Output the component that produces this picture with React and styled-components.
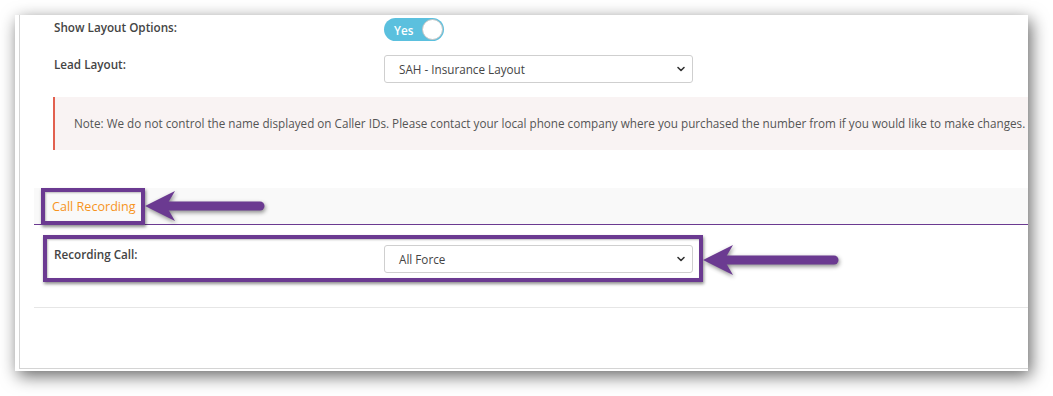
import React from 'react';
import styled, { createGlobalStyle } from 'styled-components';

const GlobalStyle = createGlobalStyle`
  html, body {
    margin: 0;
    padding: 0;
    background: #ffffff;
  }
  body {
    font-family: 'Open Sans', 'Noto Sans', sans-serif;
    color: #4a4a4a;
  }
`;

const Page = styled.div`
  position: relative;
  width: 1053px;
  height: 396px;
  padding: 15px 25px 25px 15px;
  box-sizing: border-box;
  overflow: hidden;
`;

const Frame = styled.div`
  width: 1013px;
  height: 356px;
  background: #fff;
  overflow: hidden;
  box-shadow: 3px 5px 16px rgba(0, 0, 0, 0.6);
`;

const Panel = styled.div`
  margin-left: 4px;
  width: 1100px;
  height: 354px;
  box-sizing: border-box;
  border-left: 1px solid #d4d4d4;
  border-bottom: 1px solid #d4d4d4;
  padding: 3px 0 0 14px;
`;

const Row = styled.div`
  display: grid;
  grid-template-columns: 330px 309px;
  padding-left: 20px;
  margin-top: ${(p) => p.$top || 0}px;
  align-items: start;
`;

const Label = styled.div`
  font-size: 11.7px;
  font-weight: 600;
  line-height: 18px;
  color: #444;
`;

const Toggle = styled.div`
  display: flex;
  align-items: center;
  justify-content: space-between;
  width: 60px;
  height: 23px;
  box-sizing: border-box;
  border-radius: 12px;
  background: #5bc0de;
  padding: 0 1px 0 10px;
  color: #fff;
  font-size: 11.7px;
  font-weight: 600;
`;

const Knob = styled.span`
  width: 21px;
  height: 21px;
  box-sizing: border-box;
  border-radius: 50%;
  background: #fff;
  border: 1px solid #c4c4c4;
`;

const Select = styled.div`
  display: flex;
  align-items: center;
  justify-content: space-between;
  height: 28px;
  box-sizing: border-box;
  border: 1px solid #cfcfcf;
  border-radius: 3px;
  padding: 0 5px 0 14px;
  font-size: 11.7px;
  color: #444;
  background: #fff;
`;

const Note = styled.div`
  margin: 14px 0 0 19px;
  height: 53px;
  box-sizing: border-box;
  display: flex;
  align-items: center;
  background: #f9f3f3;
  border-left: 2px solid #e2604f;
  padding-left: 19px;
  font-size: 11.69px;
  color: #555;
  white-space: nowrap;
`;

const SectionBar = styled.div`
  margin-top: 38px;
  height: 37px;
  box-sizing: border-box;
  display: flex;
  align-items: center;
  padding: 1px 0 0 18px;
  background: #f9f9f9;
  border-bottom: 1px solid #6b3a91;
  font-size: 12.6px;
  color: #f7941d;
`;

const Group = styled.div`
  padding-bottom: 34px;
  border-bottom: 1px solid #e6e6e6;
`;

const Box = styled.div`
  position: absolute;
  left: ${(p) => p.$x}px;
  top: ${(p) => p.$y}px;
  width: ${(p) => p.$w}px;
  height: ${(p) => p.$h}px;
  box-sizing: border-box;
  border: 4px solid #6b3a91;
  box-shadow: 1px 2px 3px rgba(0, 0, 0, 0.45), inset 1px 1px 2px rgba(0, 0, 0, 0.25);
`;

const ArrowSvg = styled.svg`
  position: absolute;
  left: 0;
  top: 0;
  overflow: visible;
  filter: drop-shadow(1px 2px 2px rgba(0, 0, 0, 0.45));
`;

function Chevron() {
  return (
    <svg width="12" height="8" viewBox="0 0 12 8">
      <polyline points="3,2.5 6,5.5 9,2.5" fill="none" stroke="#333" strokeWidth="1.6" strokeLinecap="round" strokeLinejoin="round" />
    </svg>
  );
}

function Arrow({ x, y, end }) {
  return (
    <>
      <line x1={x + 22} y1={y} x2={end} y2={y} stroke="#6b3a91" strokeWidth="9" strokeLinecap="round" />
      <path
        d={`M${x},${y} L${x + 30},${y - 15} L${x + 23},${y - 3} L${x + 23},${y + 3} L${x + 30},${y + 15} Z`}
        fill="#6b3a91"
      />
    </>
  );
}

export default function App() {
  return (
    <>
      <GlobalStyle />
      <Page>
        <Frame>
          <Panel>
            <Row>
              <Label>Show Layout Options:</Label>
              <Toggle>
                Yes
                <Knob />
              </Toggle>
            </Row>
            <Row $top={14}>
              <Label>Lead Layout:</Label>
              <Select>
                SAH - Insurance Layout
                <Chevron />
              </Select>
            </Row>
            <Note>
              Note: We do not control the name displayed on Caller IDs. Please contact your local phone company where you purchased the number from if you would like to make changes.
            </Note>
            <SectionBar>Call Recording</SectionBar>
            <Group>
              <Row $top={20}>
                <Label>Recording Call:</Label>
                <Select>
                  All Force
                  <Chevron />
                </Select>
              </Row>
            </Group>
          </Panel>
        </Frame>
        <Box $x={41} $y={188} $w={104} $h={37} />
        <Box $x={43} $y={235} $w={660} $h={47} />
        <ArrowSvg width="1053" height="396">
          <Arrow x={145} y={206} end={260} />
          <Arrow x={703} y={260} end={834} />
        </ArrowSvg>
      </Page>
    </>
  );
}
